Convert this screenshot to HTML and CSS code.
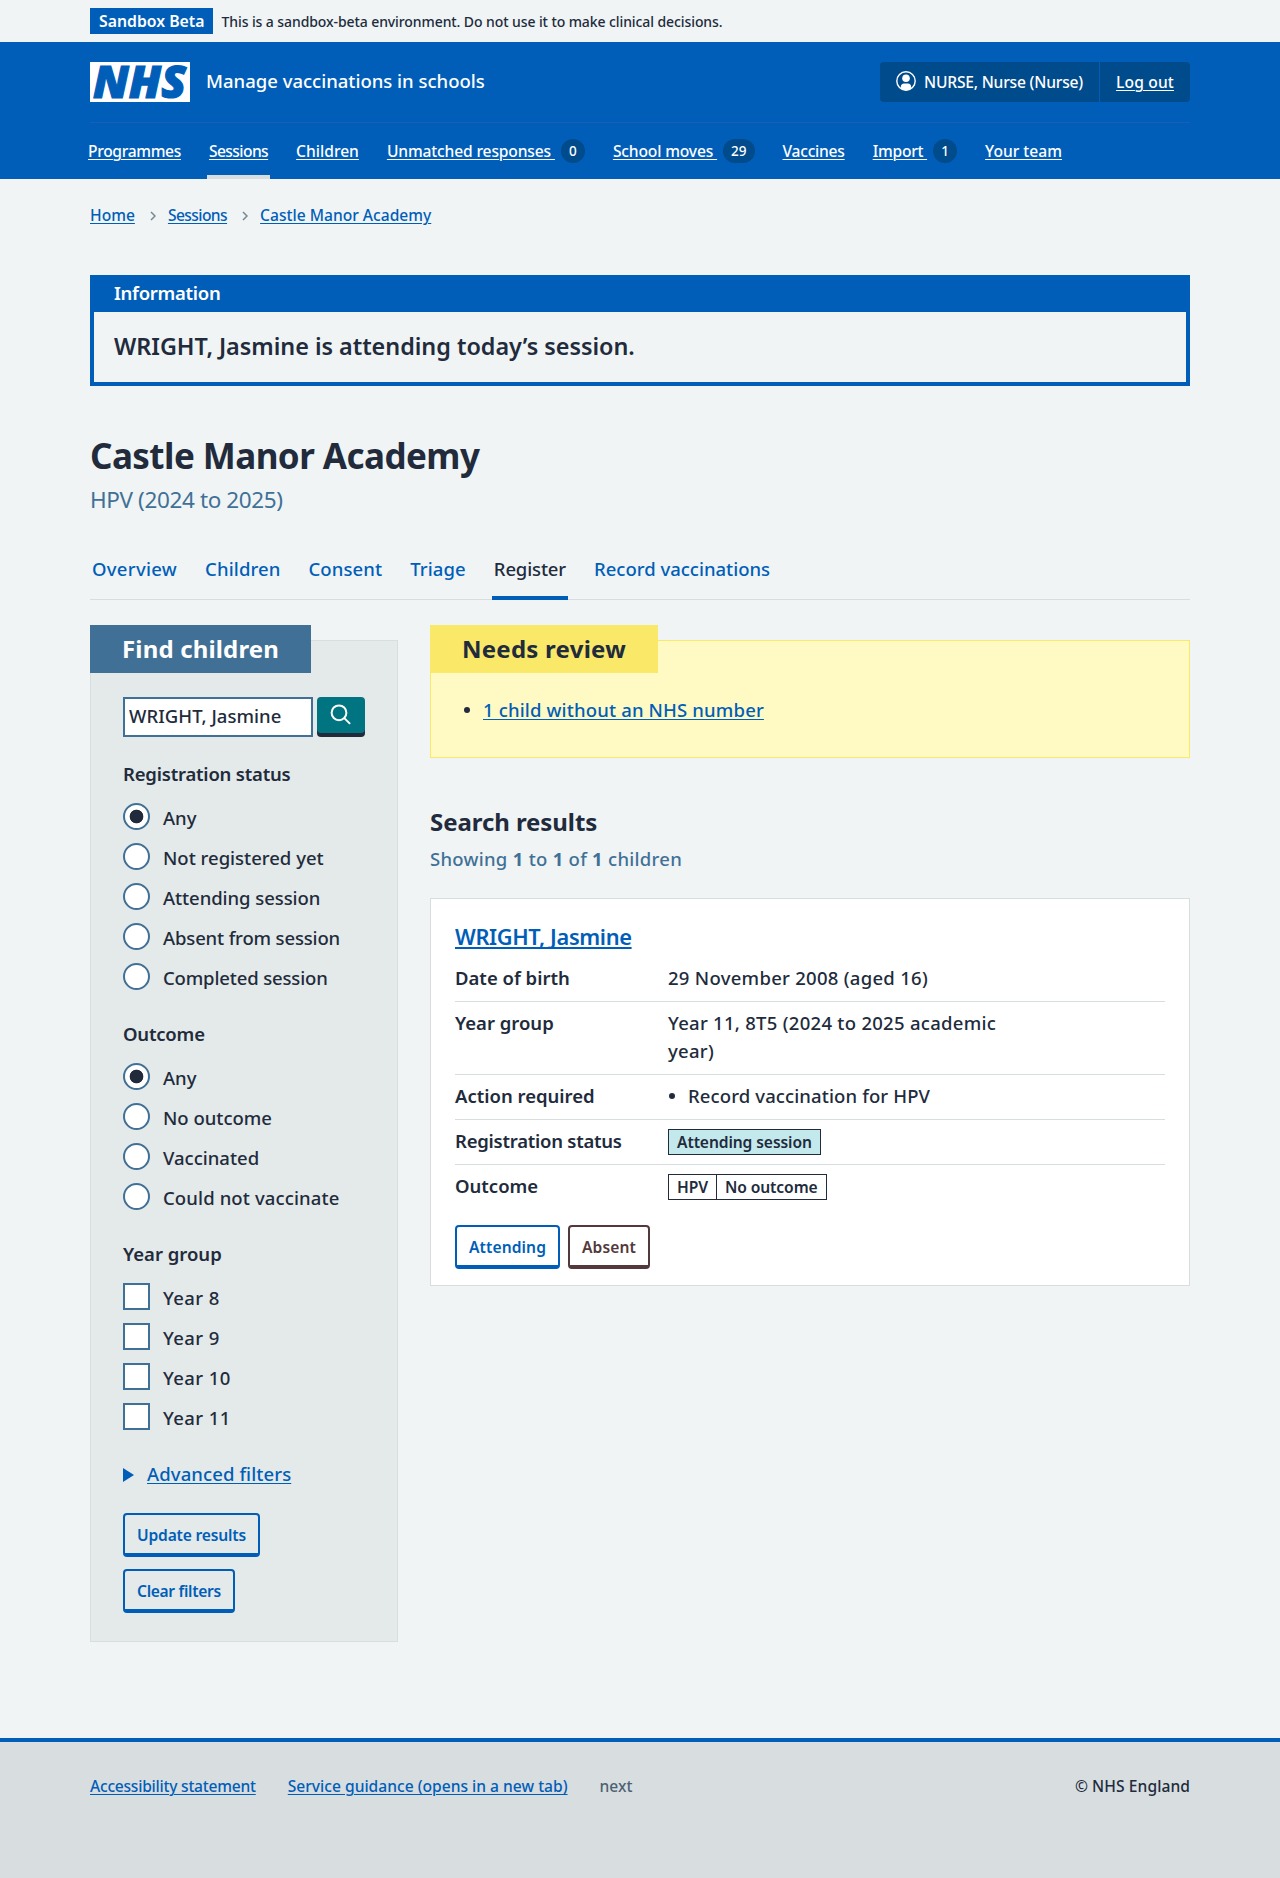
FILE: index.html
```html
<!DOCTYPE html>
<html lang="en">
<head>
<meta charset="utf-8">
<title>Castle Manor Academy – Manage vaccinations in schools</title>
<link rel="stylesheet" href="styles.css">
</head>
<body>
<div class="environment container">
  <strong class="environment-tag">Sandbox Beta</strong>
  <span class="environment-text">This is a sandbox-beta environment. Do not use it to make clinical decisions.</span>
</div>

<header class="header">
  <div class="container">
    <div class="header-top">
      <svg class="logo" width="100" height="40" viewBox="0 0 100 40" role="img" aria-label="NHS">
        <rect width="100" height="40" fill="#fff"/>
        <text x="3" y="36.300" textLength="93" lengthAdjust="spacingAndGlyphs" fill="#005eb8" stroke="#005eb8" stroke-width="1.200">NHS</text>
      </svg>
      <span class="service">Manage vaccinations in schools</span>
      <div class="account">
        <span class="account-item account-user">
          <svg class="user-icon" width="20" height="20" viewBox="0 0 20 20" aria-hidden="true">
            <defs><clipPath id="face"><circle cx="10" cy="10" r="9.300"/></clipPath></defs>
            <circle cx="10" cy="10" r="9.200" fill="none" stroke="#fff" stroke-width="1.400"/>
            <g fill="#fff" clip-path="url(#face)"><circle cx="10" cy="7.300" r="3.800"/><path d="M4.800 20v-4c0-2 1.400-3.500 3.200-3.500h4c1.800 0 3.200 1.500 3.200 3.500v4z"/></g>
          </svg>
          NURSE, Nurse (Nurse)
        </span>
        <a class="account-item account-logout" href="#">Log out</a>
      </div>
    </div>
    <nav class="nav">
      <a class="nav-item ls-programmes" href="#">Programmes</a>
      <a class="nav-item nav-current ls-5" href="#">Sessions</a>
      <a class="nav-item" href="#">Children</a>
      <a class="nav-item nav-counted ls-1" href="#"><u>Unmatched responses </u><span class="badge">0</span></a>
      <a class="nav-item nav-counted ls-1" href="#"><u>School moves </u><span class="badge">29</span></a>
      <a class="nav-item ls-2" href="#">Vaccines</a>
      <a class="nav-item nav-counted ls-2" href="#"><u>Import </u><span class="badge">1</span></a>
      <a class="nav-item" href="#">Your team</a>
    </nav>
  </div>
</header>

<div class="container">
  <nav class="breadcrumb">
    <a href="#">Home</a>
    <svg width="6" height="10" viewBox="0 0 6 10"><path d="M1 1l4 4-4 4"/></svg>
    <a class="ls-5" href="#">Sessions</a>
    <svg width="6" height="10" viewBox="0 0 6 10"><path d="M1 1l4 4-4 4"/></svg>
    <a href="#">Castle Manor Academy</a>
  </nav>

  <main>
    <section class="banner">
      <h2 class="banner-title">Information</h2>
      <p class="banner-body">WRIGHT, Jasmine is attending today’s session.</p>
    </section>

    <h1 class="title">Castle Manor Academy</h1>
    <p class="caption">HPV (2024 to 2025)</p>

    <nav class="tabs">
      <a class="tab tab-overview" href="#">Overview</a>
      <a class="tab" href="#">Children</a>
      <a class="tab" href="#">Consent</a>
      <a class="tab" href="#">Triage</a>
      <a class="tab tab-current" href="#">Register</a>
      <a class="tab tab-record" href="#">Record vaccinations</a>
    </nav>

    <div class="columns">
      <form class="card filters">
        <h2 class="card-label filters-label">Find children</h2>
        <div class="search">
          <input class="search-input" type="text" value="WRIGHT, Jasmine" aria-label="Search">
          <button class="search-button" type="button" aria-label="Search">
            <svg width="22" height="22" viewBox="0 0 22 22"><circle cx="9" cy="8.800" r="7.400"/><path d="M14.300 14.100l5.800 5.800"/></svg>
          </button>
        </div>

        <h3 class="legend">Registration status</h3>
        <label class="choice"><span class="radio radio-on"></span>Any</label>
        <label class="choice"><span class="radio"></span>Not registered yet</label>
        <label class="choice ls-0"><span class="radio"></span>Attending session</label>
        <label class="choice ls-1"><span class="radio"></span>Absent from session</label>
        <label class="choice ls-1"><span class="radio"></span>Completed session</label>

        <h3 class="legend">Outcome</h3>
        <label class="choice"><span class="radio radio-on"></span>Any</label>
        <label class="choice"><span class="radio"></span>No outcome</label>
        <label class="choice"><span class="radio"></span>Vaccinated</label>
        <label class="choice choice-wide"><span class="radio"></span>Could not vaccinate</label>

        <h3 class="legend legend-year">Year group</h3>
        <label class="choice choice-year"><span class="checkbox"></span>Year 8</label>
        <label class="choice choice-year"><span class="checkbox"></span>Year 9</label>
        <label class="choice choice-year"><span class="checkbox"></span>Year 10</label>
        <label class="choice choice-year"><span class="checkbox"></span>Year 11</label>

        <div class="advanced">
          <svg width="11" height="14" viewBox="0 0 11 14"><path d="M0 0l11 7-11 7z"/></svg>
          <a href="#">Advanced filters</a>
        </div>
        <div class="filter-buttons">
          <button class="button" type="button">Update results</button>
          <button class="button button-clear" type="button">Clear filters</button>
        </div>
      </form>

      <div class="results">
        <section class="card review">
          <h2 class="card-label review-label">Needs review</h2>
          <p class="bullet review-item"><a href="#">1 child without an NHS number</a></p>
        </section>

        <h2 class="results-title">Search results</h2>
        <p class="results-count">Showing <b>1</b> to <b>1</b> of <b>1</b> children</p>

        <article class="patient">
          <h3 class="patient-name"><a href="#">WRIGHT, Jasmine</a></h3>
          <dl class="summary">
            <div class="row"><dt>Date of birth</dt><dd>29 November 2008 (aged 16)</dd></div>
            <div class="row"><dt>Year group</dt><dd>Year 11, 8T5 (2024 to 2025 academic year)</dd></div>
            <div class="row"><dt>Action required</dt><dd class="bullet action">Record vaccination for HPV</dd></div>
            <div class="row"><dt class="ls-2">Registration status</dt><dd><span class="tag tag-aqua">Attending session</span></dd></div>
            <div class="row"><dt>Outcome</dt><dd><span class="tag"><span class="tag-part">HPV</span><span>No outcome</span></span></dd></div>
          </dl>
          <div class="patient-buttons">
            <button class="button button-action" type="button">Attending</button>
            <button class="button button-action button-brown" type="button">Absent</button>
          </div>
        </article>
      </div>
    </div>
  </main>
</div>

<footer class="footer">
  <div class="container footer-row">
    <a class="ls-2" href="#">Accessibility statement</a>
    <a href="#">Service guidance (opens in a new tab)</a>
    <span class="version">next</span>
    <span class="copyright">© NHS England</span>
  </div>
</footer>
</body>
</html>
```
FILE: styles.css
```css
* { box-sizing: border-box; }

body {
  margin: 0;
  background: #f0f4f5;
  color: #212b3c;
  font: 500 18.5px/28px "Noto Sans", "Open Sans", sans-serif;
}

h1, h2, h3, p, dl, dd { margin: 0; }
a { color: #005eb8; text-decoration-thickness: 1px; text-underline-offset: 2px; }
strong, dt, h3 { font-weight: 600; }
b, h1, h2 { font-weight: 700; }

.container { width: 1100px; margin: 0 auto; }

/* Letter-spacing steps */
.ls-0 { letter-spacing: -.06px; }
.ls-1 { letter-spacing: -.15px; }
.ls-2 { letter-spacing: -.24px; }
.ls-5 { letter-spacing: -.58px; }
.ls-programmes { letter-spacing: -.33px; }

/* Environment bar */
.environment { display: flex; align-items: center; gap: 8px; height: 42px; font-size: 14px; letter-spacing: -.09px; }
.environment-tag { padding: 0 9px; background: #005eb8; color: #fff; font-size: 15.8px; line-height: 26px; letter-spacing: 0; }
.environment-text { padding-top: 2px; }

/* Header */
.header { height: 137px; background: #005eb8; color: #fff; }
.header a { color: #fff; }
.header-top { display: flex; align-items: center; height: 81px; padding-bottom: 1px; border-bottom: 1px solid #1a5fb5; }
.logo { overflow: visible; }
.logo text { font: italic 800 44.500px "Open Sans", sans-serif; }
.service { margin: -2px 0 0 16px; letter-spacing: 0; }
.account { display: flex; height: 40px; margin-left: auto; background: #004b8c; border-radius: 4px; font-size: 15.6px; line-height: 40px; }
.account-item { display: flex; align-items: center; padding: 0 16px; }
.account-user { gap: 8px; border-right: 1px solid #005eb8; letter-spacing: -.19px; }
.user-icon { margin-top: -2px; }
.account-logout { letter-spacing: .16px; }
.nav { display: flex; gap: 24px; margin-left: -4px; font-size: 15.6px; line-height: 56px; }
.nav-item { display: flex; height: 56px; padding: 0 2px; }
.nav-counted { text-decoration: none; }
.nav-item u { white-space: pre; text-decoration-thickness: 1px; text-underline-offset: 2px; }
.nav-current { border-bottom: 4px solid #d8dde0; }
.badge { align-self: center; min-width: 24px; margin-left: 6px; padding: 0 8px; border-radius: 12px; background: #004b8c; font-size: 13.500px; line-height: 24px; text-align: center; letter-spacing: 0; }

/* Breadcrumb */
.breadcrumb { display: flex; align-items: center; padding-top: 24px; font-size: 15.6px; line-height: 24px; }
.breadcrumb svg { margin: 1px 12px 0 15px; fill: none; stroke: #768692; stroke-width: 1.500; }

/* Information banner */
.banner { margin-top: 48px; border: 4px solid #005eb8; border-top: 0; }
.banner-title { padding: 4px 20px 5px; background: #005eb8; color: #fff; font-size: 18.5px; font-weight: 600; letter-spacing: -.28px; }
.banner-body { padding: 18px 20px 20px; font-size: 23.4px; font-weight: 600; line-height: 32px; letter-spacing: -.03px; }

.title { margin-top: 48px; font-size: 35px; line-height: 44px; letter-spacing: -.55px; }
.caption { margin-top: 7px; color: #417096; font-size: 22.500px; font-weight: 400; line-height: 30px; letter-spacing: -.38px; }

/* Tabs */
.tabs { display: flex; gap: 24px; margin-top: 25px; box-shadow: inset 0 -1px #d8dde0; }
.tab { height: 60px; padding: 15px 2px 0; text-decoration: none; letter-spacing: .11px; }
.tab-overview { letter-spacing: .31px; }
.tab-current { color: #212b3c; border-bottom: 4px solid #005eb8; letter-spacing: -.14px; }
.tab-record { letter-spacing: 0; }

.columns { display: grid; grid-template-columns: 308px 760px; gap: 32px; align-items: start; margin-top: 25px; }

/* Labelled cards */
.card { margin-top: 15px; padding: 0 32px; border: 1px solid #d8dde0; background: #e4e9e9; }
.card-label { width: max-content; margin: -16px 0 24px -33px; padding: 0 32px; font-size: 24px; line-height: 48px; letter-spacing: .16px; }
.filters { padding-bottom: 28px; }
.filters-label { background: #417096; color: #fff; }

.search { display: flex; gap: 4px; }
.search-input { width: 190px; height: 40px; padding: 0 4px 3px; border: 2px solid #417096; border-radius: 0; background: #fff; color: inherit; font: inherit; letter-spacing: .04px; }
.search-button { width: 48px; height: 36px; padding: 0 1px 1px 0; border: 0; border-radius: 4px; background: #007480; box-shadow: 0 4px #212b3c; }
.search-button svg { display: block; margin: 0 auto; fill: none; stroke: #fff; stroke-width: 2; }

.legend { margin: 23px 0 9px; font-size: 18.5px; line-height: 28px; letter-spacing: -.2px; }
.legend-year { letter-spacing: 0; }
.choice { display: flex; gap: 13px; height: 40px; padding-top: 7px; }
.choice-wide { letter-spacing: .12px; }
.choice-year { letter-spacing: .42px; }
.radio, .checkbox { flex: none; width: 27px; height: 27px; margin-top: -1px; border: 2px solid #417096; background: #fff; }
.radio { border-radius: 50%; }
.radio-on { background: radial-gradient(circle, #212b3c 6.500px, #fff 7.200px); }

.advanced { display: flex; align-items: center; gap: 13px; margin-top: 23px; letter-spacing: .1px; }
.advanced svg { margin-top: 2px; fill: #005eb8; }
.filter-buttons { display: flex; flex-direction: column; align-items: flex-start; gap: 12px; margin-top: 25px; }

.button { height: 44px; padding: 2px 12px 0; border: 2px solid #005eb8; border-bottom-width: 4px; border-radius: 4px; background: transparent; color: #005eb8; font: 600 15.6px/24px "Noto Sans", "Open Sans", sans-serif; letter-spacing: -.18px; }
.button-clear { letter-spacing: -.32px; }
.button-action { letter-spacing: .1px; }
.button-brown { border-color: #53393b; color: #53393b; }

/* Needs review */
.review { padding-bottom: 33px; border-color: #fae968; background: #fff9c4; }
.review-label { margin-bottom: 23px; background: #fae968; letter-spacing: .25px; }
.bullet { display: flex; align-items: center; }
.bullet::before { content: ""; flex: none; width: 6px; height: 6px; margin-right: 13px; border-radius: 50%; background: #212b3c; }
.review-item { padding-left: 1px; letter-spacing: .15px; }

.results-title { margin-top: 48px; font-size: 24px; line-height: 32px; letter-spacing: -.07px; }
.results-count { margin-top: 7px; color: #417096; letter-spacing: .27px; }

/* Patient card */
.patient { margin-top: 25px; padding: 22px 24px 16px; border: 1px solid #d8dde0; background: #fff; }
.patient-name { font-size: 21.800px; font-weight: 600; line-height: 32px; letter-spacing: -.36px; }
.patient-name a { text-decoration-thickness: 2px; text-decoration-skip-ink: none; }
.summary { margin-top: 4px; }
.row { display: grid; grid-template-columns: 213px 345px; padding: 7px 0 9px; border-bottom: 1px solid #d8dde0; }
.row:last-child { padding-bottom: 0; border-bottom: 0; }
.row dd { letter-spacing: .28px; }
.row .action { padding-left: 1px; letter-spacing: .12px; }
.tag { display: flex; width: max-content; height: 26px; margin-top: 2px; padding: 0 8px; border: 1px solid #212b3c; font-size: 15.6px; font-weight: 600; line-height: 24px; }
.row .tag { letter-spacing: -.09px; }
.tag-aqua { background: #c4e9ec; }
.tag-part { margin-right: 8px; padding-right: 8px; border-right: 1px solid #212b3c; }
.patient-buttons { display: flex; gap: 8px; margin-top: 25px; }

/* Footer */
.footer { height: 140px; margin-top: 96px; padding-top: 32px; border-top: 4px solid #005eb8; background: #d8dde0; font-size: 15.6px; line-height: 24px; }
.footer-row { display: flex; gap: 32px; }
.version { color: #4c6272; }
.copyright { margin-left: auto; letter-spacing: .07px; }
```
